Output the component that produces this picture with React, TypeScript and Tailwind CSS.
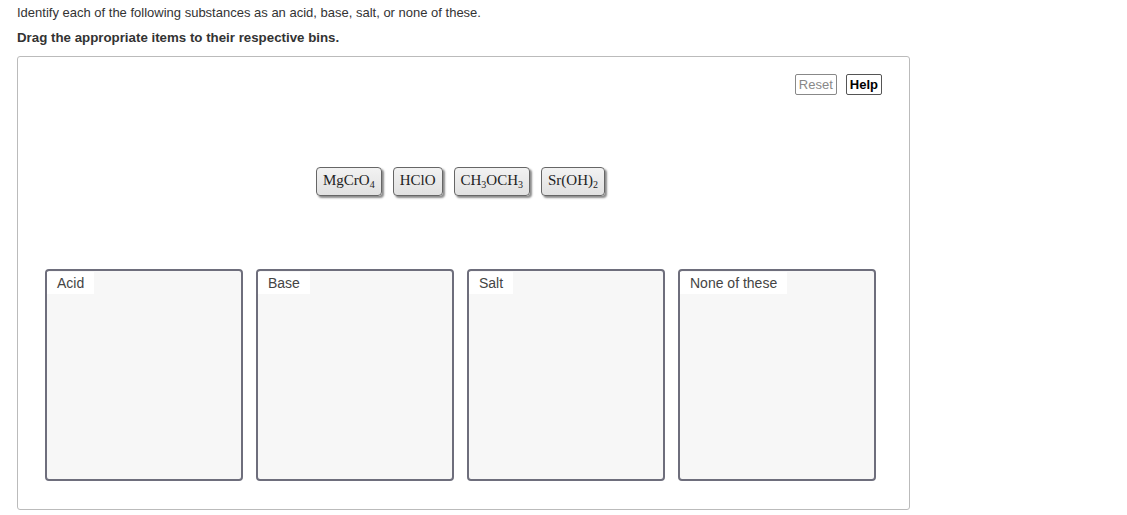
const sub = 'text-[10px] relative top-[3px] align-baseline leading-none';

const tiles = [
  { id: 'mgcro4', label: <>MgCrO<sub className={sub}>4</sub></> },
  { id: 'hclo', label: <>HClO</> },
  { id: 'ch3och3', label: <>CH<sub className={sub}>3</sub>OCH<sub className={sub}>3</sub></> },
  { id: 'sroh2', label: <>Sr(OH)<sub className={sub}>2</sub></> },
];

const bins = ['Acid', 'Base', 'Salt', 'None of these'];

export default function App() {
  return (
    <div className="w-[1127px] h-[515px] bg-white overflow-hidden pl-[17px] pt-[5px] font-['Liberation_Sans',Arial,sans-serif] text-[#333]">
      <p className="text-[13px] leading-[16px]">
        Identify each of the following substances as an acid, base, salt, or none of these.
      </p>
      <p className="mt-[9px] text-[13.3px] leading-[16px] font-bold text-[#333]">
        Drag the appropriate items to their respective bins.
      </p>

      <div className="mt-[10px] w-[893px] h-[454px] border border-[#bbbbbb] rounded-[3px] px-[27px] pt-[17px]">
        <div className="flex justify-end gap-[9px]">
          <button className="h-[21px] px-[3px] border border-[#888] rounded-[2px] text-[13px] leading-[19px] text-[#888]">
            Reset
          </button>
          <button className="h-[21px] px-[3px] border border-[#555] rounded-[2px] text-[13px] leading-[19px] text-black font-bold">
            Help
          </button>
        </div>

        <div className="mt-[72px] flex justify-center gap-[11px] w-[831px]">
          {tiles.map((t) => (
            <div
              key={t.id}
              className="h-[29px] px-[6px] flex items-center border border-[#666] rounded-[4px] bg-gradient-to-b from-[#f2f2f2] to-[#e1e1e1] shadow-[2px_2px_2px_rgba(0,0,0,0.45)] font-['Liberation_Serif','Times_New_Roman',serif] text-[15px] text-[#222]"
            >
              <span className="leading-none -mt-[2px]">{t.label}</span>
            </div>
          ))}
        </div>

        <div className="mt-[73px] flex gap-[13px]">
          {bins.map((b) => (
            <div
              key={b}
              className="w-[198px] h-[212px] border-2 border-[#6e6e7c] rounded-[4px] bg-[#f7f7f7]"
            >
              <div className="inline-block bg-white pl-[10px] pr-[10px] h-[22px] text-[14px] leading-[22px] text-[#444]">
                {b}
              </div>
            </div>
          ))}
        </div>
      </div>
    </div>
  );
}
